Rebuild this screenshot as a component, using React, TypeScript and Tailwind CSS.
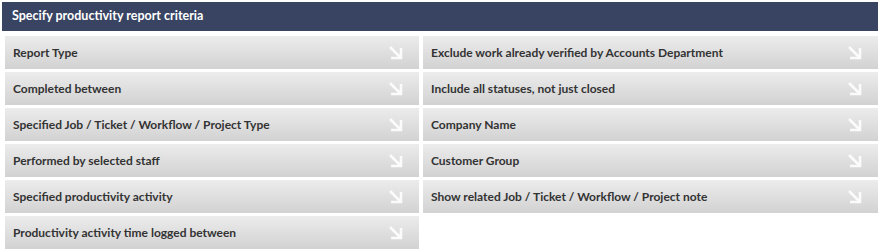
import React from "react";

const left = [
  "Report Type",
  "Completed between",
  "Specified Job / Ticket / Workflow / Project Type",
  "Performed by selected staff",
  "Specified productivity activity",
  "Productivity activity time logged between",
];
const right = [
  "Exclude work already verified by Accounts Department",
  "Include all statuses, not just closed",
  "Company Name",
  "Customer Group",
  "Show related Job / Ticket / Workflow / Project note",
];

function Arrow() {
  return (
    <svg width="16" height="17" viewBox="0 0 16 17" className="shrink-0">
      <path d="M2 3 L13 14 M3 14 H13 V4" stroke="#fbfbfb" strokeWidth="2.6" fill="none" strokeLinecap="butt" strokeLinejoin="miter" />
    </svg>
  );
}

function Cell({ label }: { label: string }) {
  return (
    <div className="h-[33px] flex items-center justify-between pl-[8px] pr-[15px] bg-gradient-to-b from-[#ececec] to-[#d2d2d2] text-[12px] font-bold text-[#333333]">
      <span>{label}</span>
      <Arrow />
    </div>
  );
}

export default function App() {
  const rows = [];
  for (let i = 0; i < 6; i++) {
    rows.push(<Cell key={"l" + i} label={left[i]} />);
    rows.push(right[i] ? <Cell key={"r" + i} label={right[i]} /> : <div key={"r" + i} />);
  }
  return (
    <div className="w-[882px] h-[252px] bg-white pt-[2px] pl-[2px]" style={{ fontFamily: "Lato, 'Noto Sans', sans-serif" }}>
      <div className="w-[876px] h-[29px] bg-[#394463] text-white text-[12.5px] font-bold flex items-center pl-[10px]">
        Specify productivity report criteria
      </div>
      <div className="grid grid-cols-[414px_455px] gap-x-[4px] gap-y-[3px] mt-[5px] ml-[3px]">
        {rows}
      </div>
    </div>
  );
}
